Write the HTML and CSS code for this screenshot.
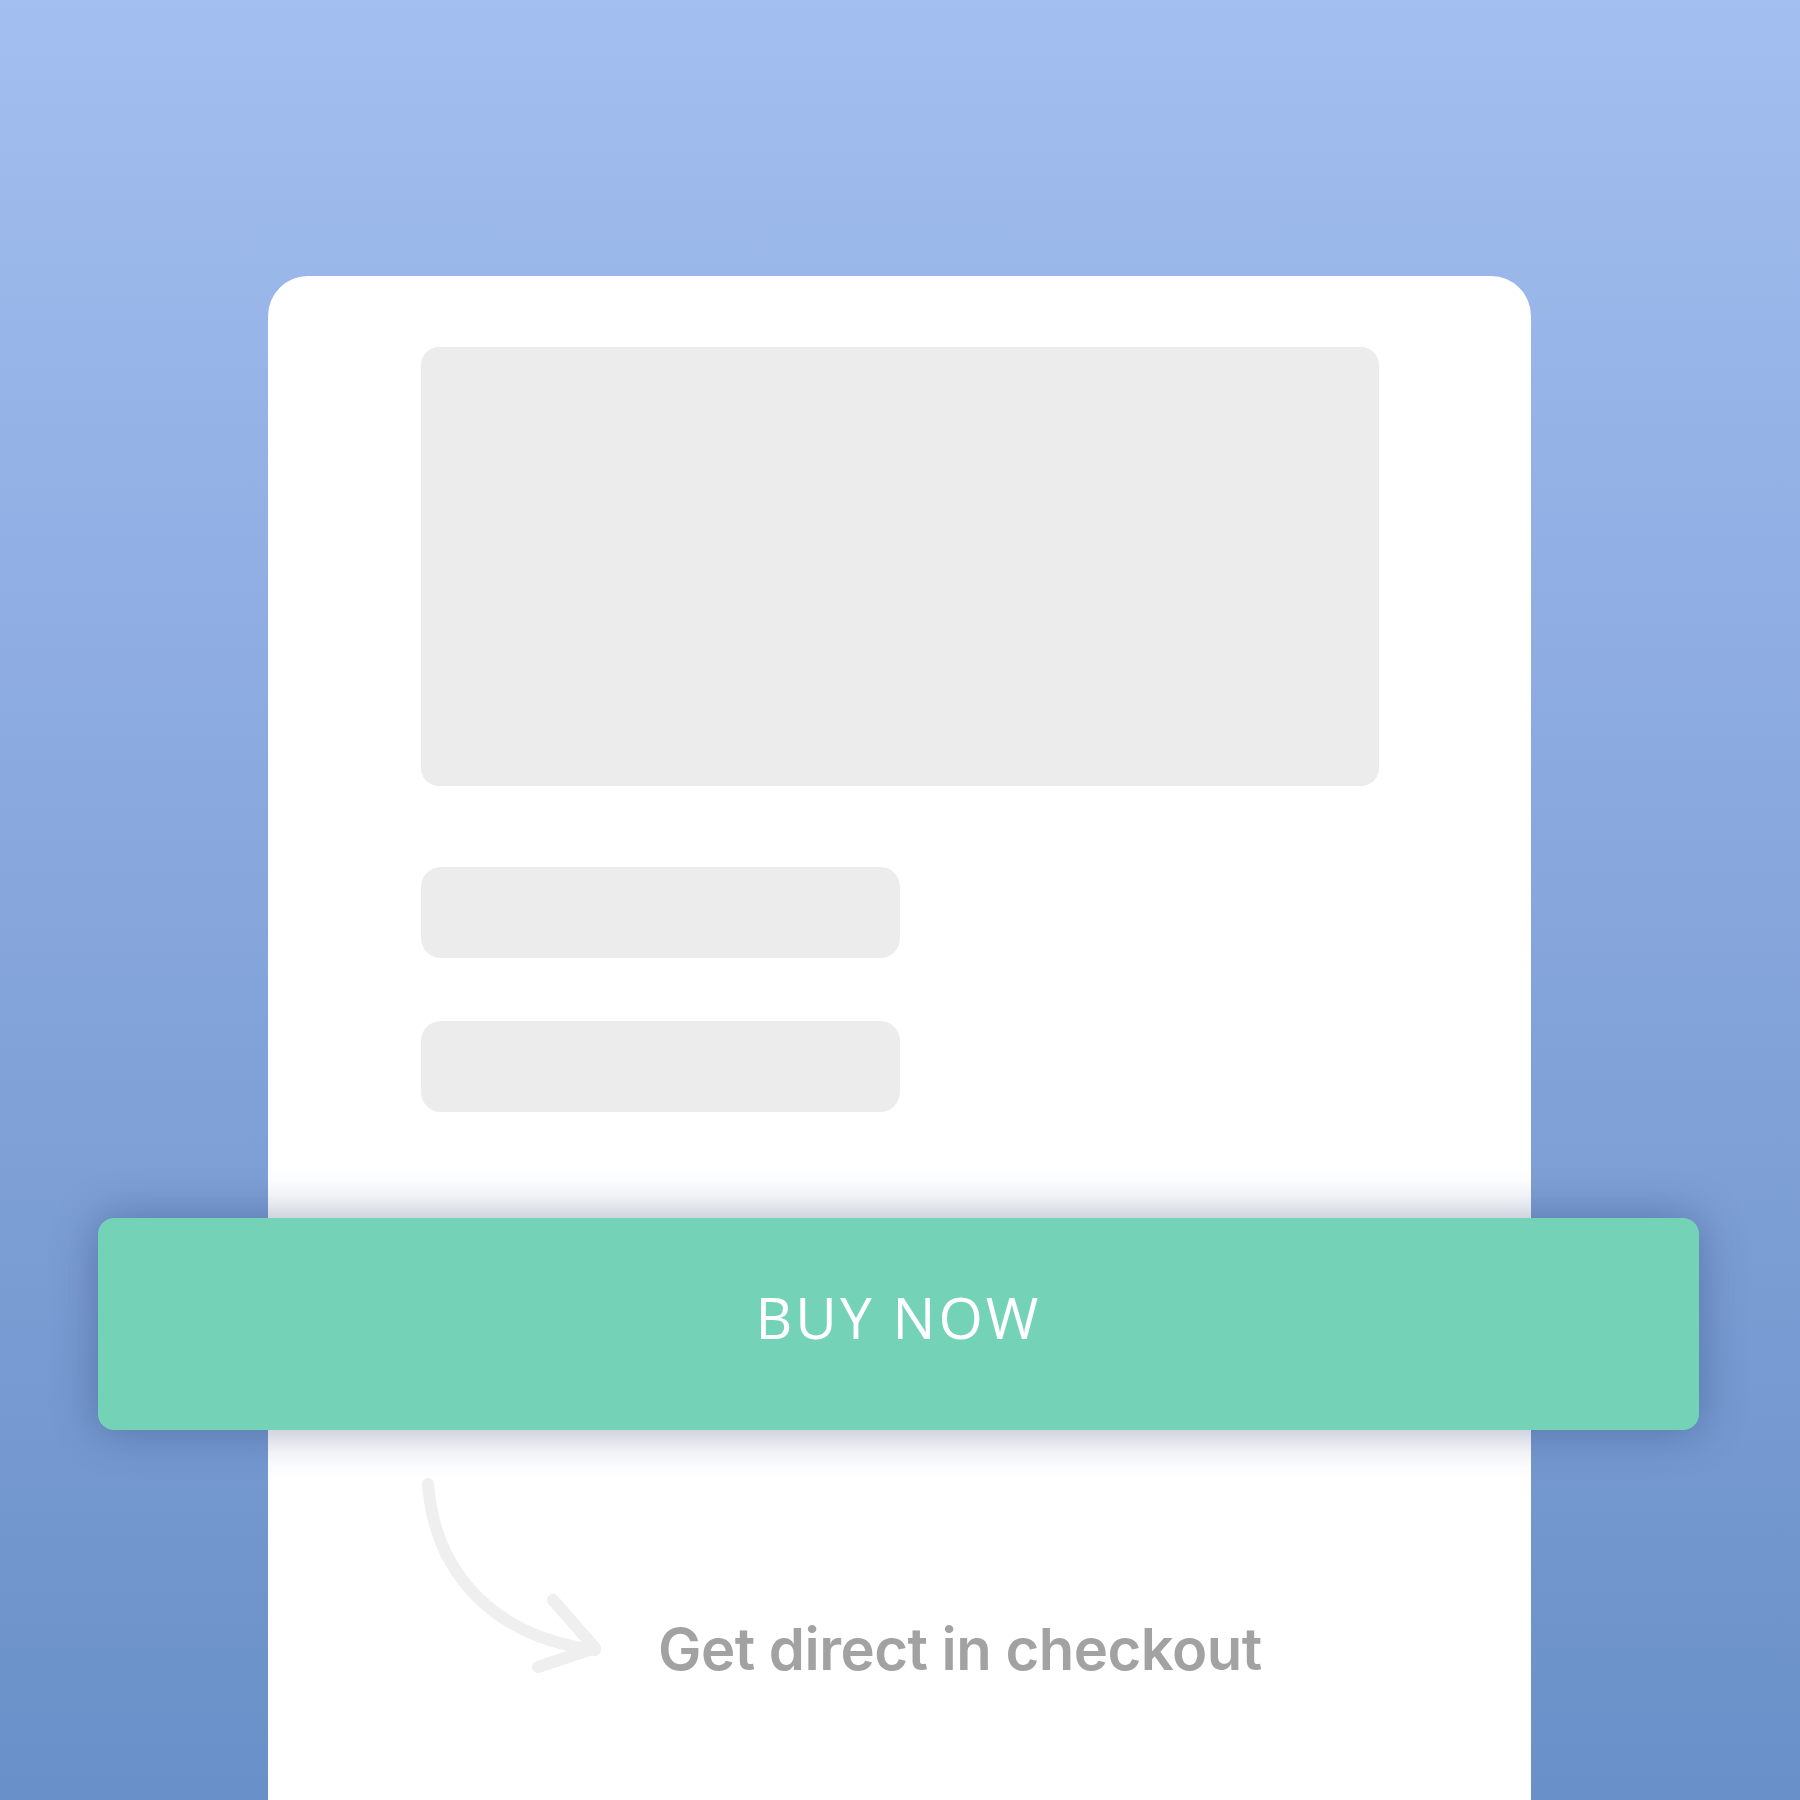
FILE: index.html
```html
<!DOCTYPE html>
<html>

<head>
    <link rel="stylesheet" href="styles.css">
</head>

<body>
    <main class="page">
        <section class="card">
            <!-- placeholders -->
            <div class="hero"></div>
            <div class="line"></div>
            <div class="line second"></div>

            <button class="buy">BUY NOW</button>

            <div class="hint">
                <svg class="arrow" width="190" height="205" viewBox="0 0 190 205">
                    <path d="M7 9 C14 100 74 162 174 175" />
                    <path d="M132 125 L174 173 L117 192" />
                </svg>
                <p class="hint-text">Get direct in checkout</p>
            </div>
        </section>
    </main>
</body>

</html>
```
FILE: styles.css
```css
* {
    margin: 0;
    padding: 0;
    box-sizing: border-box;
}

body {
    width: 1800px;
    height: 1800px;
    overflow: hidden;
    background: linear-gradient(180deg, #a3bef0 0%, #86a6dc 50%, #6990c8 100%);
    font-family: "Inter", "Roboto", sans-serif;
}

.page {
    padding: 276px 0 0 268px;
}

.card {
    width: 1263px;
    height: 1562px;
    background-color: #fff;
    border-radius: 40px;
    padding: 71px 0 0 153px;
    display: flex;
    flex-direction: column;
}

.hero {
    width: 958px;
    height: 439px;
    background-color: #ececec;
    border-radius: 18px;
}

.line {
    width: 479px;
    height: 91px;
    margin-top: 81px;
    background-color: #ececec;
    border-radius: 20px;
}

.line.second {
    margin-top: 63px;
}

.buy {
    width: 1601px;
    height: 212px;
    margin: 106px 0 0 -323px;
    border: none;
    border-radius: 16px;
    background-color: #74d3b6;
    box-shadow: 0 0 45px rgba(45, 65, 115, .45);
    color: #fff;
    font-family: "Open Sans", sans-serif;
    font-weight: 400;
    font-size: 57px;
    letter-spacing: 3px;
    padding-bottom: 14px;
}

.hint {
    display: flex;
    align-items: flex-start;
    margin-top: 45px;
}

.arrow {
    flex: none;
}

.arrow path {
    fill: none;
    stroke: #efefef;
    stroke-width: 12;
    stroke-linecap: round;
    stroke-linejoin: round;
}

.hint-text {
    margin: 145px 0 0 47px;
    font-size: 58px;
    line-height: 58px;
    font-weight: 600;
    color: #a2a2a2;
    letter-spacing: -0.5px;
}
```
